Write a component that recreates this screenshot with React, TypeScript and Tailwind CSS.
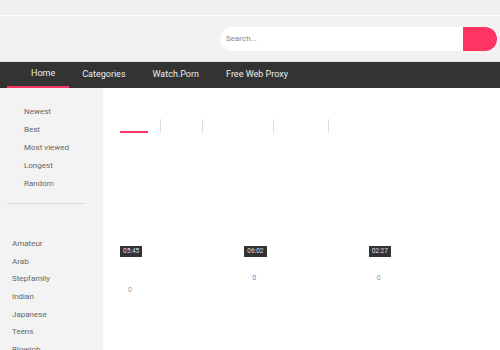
import React from "react";

const sorts = ["Newest", "Best", "Most viewed", "Longest", "Random"];
const cats = ["Amateur", "Arab", "Stepfamily", "Indian", "Japanese", "Teens", "Blowjob"];
const navItems = ["Categories", "Watch.Porn", "Free Web Proxy"];
const videos = [
  { time: "05:45", views: "0", top: "mt-[28px]", color: "text-[#999]" },
  { time: "06:02", views: "0", top: "mt-[16px]", color: "text-[#4a8fd8]" },
  { time: "02:27", views: "0", top: "mt-[16px]", color: "text-[#999]" },
];

export default function App() {
  return (
    <div className="w-[500px] h-[350px] overflow-hidden bg-white font-['Roboto',sans-serif]">
      <div className="h-[15px] bg-[#eff0f2]" />
      <div className="h-px bg-white" />
      <header className="h-[46px] bg-[#f2f2f2] border-b border-[#e2e2e2] flex items-center justify-end pr-[3px]">
        <div className="flex h-[24px]">
          <div className="w-[243px] bg-white rounded-l-full flex items-center pl-[6px] text-[8px] text-[#888]">
            Search...
          </div>
          <button className="w-[34px] bg-[#ff3462] rounded-r-full" />
        </div>
      </header>
      <nav className="h-[26px] bg-[#333] flex pl-[7px] text-[9px] text-[#eee]">
        <div className="pl-[24px] pr-[13.5px] flex items-center border-b-2 border-[#ff3462]">Home</div>
        {navItems.map((n) => (
          <div key={n} className="px-[13.5px] flex items-center">
            {n}
          </div>
        ))}
      </nav>
      <div className="flex h-[262px]">
        <aside className="w-[103px] shrink-0 bg-[#f3f3f3] text-[8px] text-[#666]">
          <ul className="pt-[15px] pl-[24px]">
            {sorts.map((s) => (
              <li key={s} className="h-[18px] leading-[18px]">
                {s}
              </li>
            ))}
          </ul>
          <div className="mt-[10px] ml-[7px] w-[79px] h-px bg-[#ddd]" />
          <ul className="pt-[31px] pl-[12px]">
            {cats.map((c) => (
              <li key={c} className="h-[17.7px] leading-[17.7px]">
                {c}
              </li>
            ))}
          </ul>
        </aside>
        <main className="flex-1 pl-[17px] pr-[7px]">
          <div className="flex mt-[31px] h-[14px]">
            <div className="w-[28px] border-b-2 border-[#ff3462]" />
            <div className="w-[12px]" />
            <div className="w-[42px] border-l border-[#ddd]" />
            <div className="w-[71px] border-l border-[#ddd]" />
            <div className="w-[55px] border-l border-[#ddd]" />
            <div className="w-[40px] border-l border-[#ddd]" />
          </div>
          <div className="grid grid-cols-3 mt-[113px]">
            {videos.map((v) => (
              <div key={v.time} className="flex flex-col items-start">
                <span className="bg-[#333] text-[#dde] text-[6.5px] leading-[11px] px-[3px] h-[11px]">
                  {v.time}
                </span>
                <span className={`${v.top} ml-[8px] text-[7px] ${v.color}`}>{v.views}</span>
              </div>
            ))}
          </div>
        </main>
      </div>
    </div>
  );
}
